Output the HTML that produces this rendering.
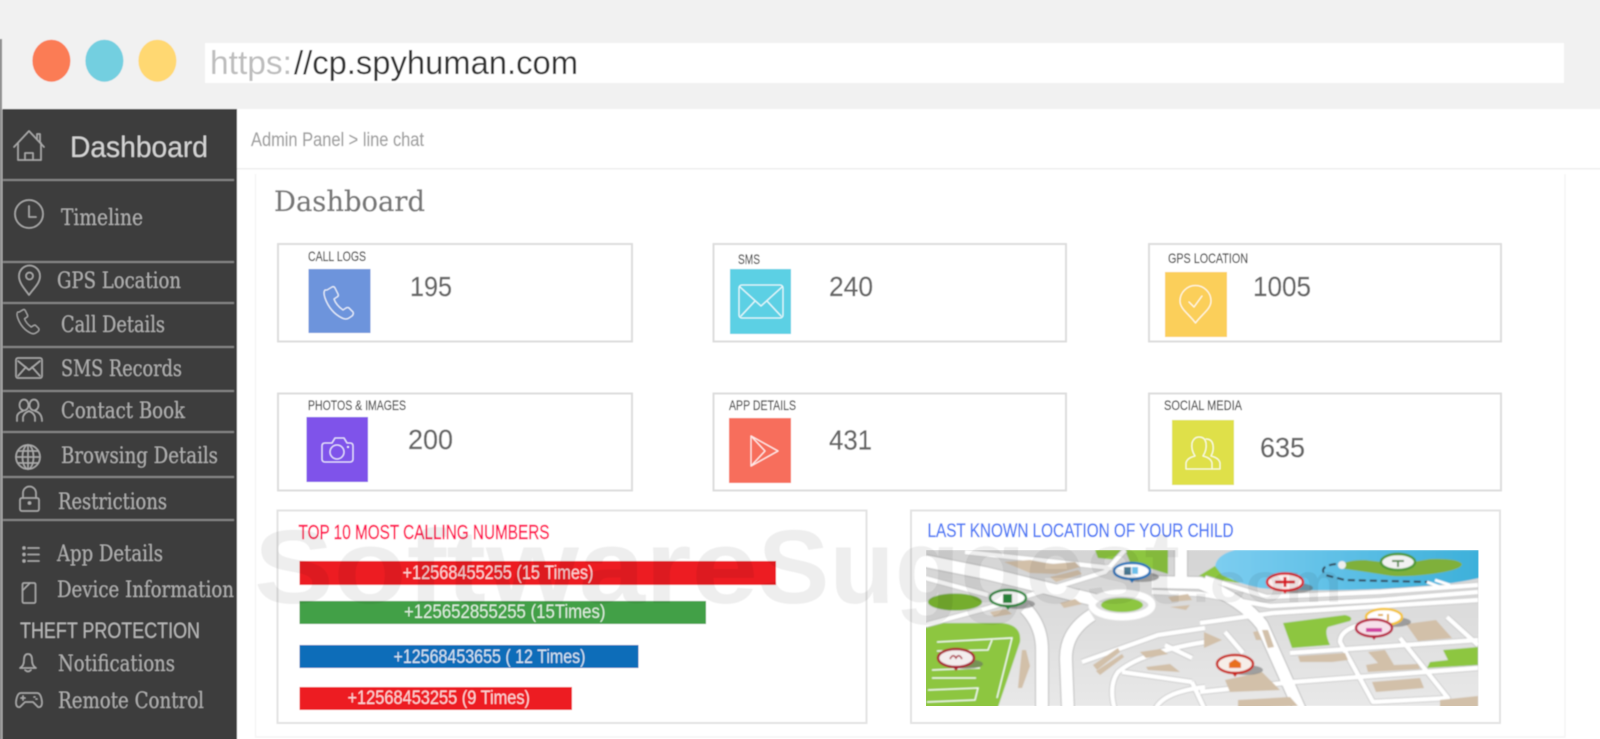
<!DOCTYPE html>
<html lang="en">
<head>
<meta charset="utf-8">
<title>cp.spyhuman.com Dashboard</title>
<style>
html,body{margin:0;padding:0;background:#fff;width:1600px;height:739px;overflow:hidden}
svg{display:block}
.ss{font-family:"Liberation Sans",sans-serif}
.sf{font-family:"DejaVu Serif","Liberation Serif",serif;font-size:22px;fill:#b0b0b0}
.lb{font-family:"Liberation Sans",sans-serif;font-size:14px;fill:#444;stroke:#444;stroke-width:.2px}
.nm{font-family:"Liberation Sans",sans-serif;font-size:28px;fill:#666;stroke:#666;stroke-width:.25px}
.bt{font-family:"Liberation Sans",sans-serif;font-size:19px;fill:#fff;fill-opacity:.82}
.ic{fill:none;stroke:#acacac;stroke-width:1.5;stroke-linejoin:round;stroke-linecap:round}
.wi{fill:none;stroke:#fff;stroke-opacity:.85;stroke-width:1.3;stroke-linejoin:round;stroke-linecap:round}
.card{fill:#fff;stroke:#dcdcdc;stroke-width:2}
</style>
</head>
<body>
<svg width="1600" height="739" viewBox="0 0 1600 739" xmlns="http://www.w3.org/2000/svg">
<defs>
<filter id="soft" filterUnits="userSpaceOnUse" x="-20" y="-20" width="1640" height="780"><feGaussianBlur stdDeviation="0.55"/></filter>
<filter id="softer" filterUnits="userSpaceOnUse" x="900" y="530" width="600" height="190"><feGaussianBlur stdDeviation="0.8"/></filter>
<clipPath id="mapclip"><rect x="926" y="550" width="552.5" height="156"/></clipPath>
<linearGradient id="mapbg" x1="0" y1="0" x2="0" y2="1"><stop offset="0" stop-color="#d4d4d4"/><stop offset="1" stop-color="#e8e8e8"/></linearGradient>
<linearGradient id="lake" x1="0" y1="0" x2="1" y2="0"><stop offset="0" stop-color="#7ccdf0"/><stop offset="1" stop-color="#3db0da"/></linearGradient>
<g id="wide">
<path d="M925 561L985 573L1095 600"/>
<path d="M1025 608Q1042 625 1042 650L1042 710"/>
<path d="M1092 615Q1065 632 1066 660L1068 710"/>
<path d="M1152 582L1200 583Q1243 600 1262 625L1300 710"/>
<path d="M1181 550L1181 578"/>
</g>
<g id="thin">
<path d="M925 578L988 595"/>
<path d="M925 625L988 608L1105 572L1125 550"/>
<path d="M965 552L1112 568"/>
<path d="M1152 592L1200 594L1270 606L1380 600L1478 592"/>
<path d="M1205 578L1267 597L1380 592L1478 585"/>
<path d="M1200 623L1273 613L1478 600"/>
<path d="M1205 642Q1142 652 1118 672Q1108 686 1115 710"/>
<path d="M1205 628L1158 635L1082 662"/>
<path d="M1122 672L1192 682"/>
<path d="M1165 645L1192 658"/>
<path d="M1155 710Q1162 692 1205 687"/>
<path d="M1200 692L1293 682L1478 668"/>
<path d="M1290 653L1478 640"/>
<path d="M1225 632L1243 653"/>
<path d="M1377 622Q1340 626 1340 642L1373 702L1448 698L1400 638"/>
<path d="M1447 617L1478 645"/>
<path d="M1192 682L1205 710"/>
</g>
</defs>
<g filter="url(#soft)">
<rect x="-20" y="-20" width="1640" height="129" fill="#f1f1f1"/>
<ellipse cx="51.4" cy="60.7" rx="19" ry="21" fill="#fb7b55"/>
<ellipse cx="104.4" cy="60.7" rx="19" ry="21" fill="#73cfe0"/>
<ellipse cx="157.4" cy="60.7" rx="19" ry="21" fill="#ffd872"/>
<rect x="205" y="43" width="1359" height="40" fill="#fff"/>
<text class="ss" x="210" y="74" font-size="33" fill="#bdbdbd" textLength="82" lengthAdjust="spacingAndGlyphs">https:</text>
<text class="ss" x="294" y="74" font-size="33" fill="#333" textLength="284" lengthAdjust="spacingAndGlyphs">//cp.spyhuman.com</text>

<rect x="237" y="109" width="1380" height="650" fill="#fff"/>
<rect x="237" y="168" width="1380" height="1.5" fill="#eeeeee"/>
<text class="ss" x="251" y="146" font-size="19" fill="#a0a0a0" stroke="#a0a0a0" stroke-width=".2" textLength="173" lengthAdjust="spacingAndGlyphs">Admin Panel &gt; line chat</text>
<path d="M255.500 174V737H1565V174" fill="none" stroke="#f5f5f5" stroke-width="1.500"/>
<text x="274" y="211" font-family="'DejaVu Serif','Liberation Serif',serif" font-size="28" fill="#777" stroke="#777" stroke-width=".3" textLength="151" lengthAdjust="spacingAndGlyphs">Dashboard</text>

<rect x="-20" y="39" width="22" height="720" fill="#757575"/>
<rect x="0" y="39" width="1.500" height="720" fill="#999"/>
<rect x="2.500" y="109" width="234.500" height="650" fill="#3d3d3d"/>
<g fill="#858585">
<rect x="3" y="179" width="231" height="2"/>
<rect x="3" y="261" width="231" height="2"/>
<rect x="3" y="302" width="231" height="2"/>
<rect x="3" y="346" width="231" height="2"/>
<rect x="3" y="390" width="231" height="2"/>
<rect x="3" y="431" width="231" height="2"/>
<rect x="3" y="476" width="231" height="2"/>
<rect x="3" y="519" width="231" height="2"/>
</g>
<text class="ss" x="70" y="157" font-size="30" fill="#d4d4d4" textLength="138" lengthAdjust="spacingAndGlyphs">Dashboard</text>
<text class="sf" x="61" y="225" textLength="82" lengthAdjust="spacingAndGlyphs">Timeline</text>
<text class="sf" x="57" y="288" textLength="124" lengthAdjust="spacingAndGlyphs">GPS Location</text>
<text class="sf" x="61" y="332" textLength="104" lengthAdjust="spacingAndGlyphs">Call Details</text>
<text class="sf" x="61" y="376" textLength="121" lengthAdjust="spacingAndGlyphs">SMS Records</text>
<text class="sf" x="61" y="418" textLength="124" lengthAdjust="spacingAndGlyphs">Contact Book</text>
<text class="sf" x="61" y="463" textLength="157" lengthAdjust="spacingAndGlyphs">Browsing Details</text>
<text class="sf" x="58" y="509" textLength="109" lengthAdjust="spacingAndGlyphs">Restrictions</text>
<text class="sf" x="57" y="561" textLength="106" lengthAdjust="spacingAndGlyphs">App Details</text>
<text class="sf" x="57" y="597" textLength="177" lengthAdjust="spacingAndGlyphs">Device Information</text>
<text class="ss" x="20" y="638" font-size="22" fill="#b8b8b8" textLength="180" lengthAdjust="spacingAndGlyphs">THEFT PROTECTION</text>
<text class="sf" x="58" y="671" textLength="117" lengthAdjust="spacingAndGlyphs">Notifications</text>
<text class="sf" x="58" y="708" textLength="146" lengthAdjust="spacingAndGlyphs">Remote Control</text>

<!-- sidebar icons -->
<path class="ic" d="M14 147L29 131L44 147M37 139V134H40V142M18 143V160H41V143M25 160V153H33V160"/>
<circle class="ic" cx="29" cy="214" r="14"/><path class="ic" d="M29 206V217H36"/>
<path class="ic" d="M29 295C24 288 19 283 19 276A10.500 10.500 0 0 1 40 276C40 283 34 288 29 295Z"/><circle class="ic" cx="29.500" cy="276" r="3.500"/>
<g transform="translate(17 309) scale(.75)"><path class="ic" stroke-width="2" d="M3 4l5-3q2-1 3 1l3 6q1 2-1 3l-3 2q2 6 9 11l3-2q2-1 3 0l4 4q1 2-1 4l-3 2q-3 2-7 0q-12-6-17-20q-2-6 0-8z"/></g>
<rect class="ic" x="16" y="358" width="26" height="20" rx="2"/><path class="ic" d="M18 361L29 370L40 361M18 376L26 367M40 376L32 367"/>
<path class="ic" d="M17 421V417Q17 413 23 411M35 411Q42 413 42 421M23 421V417Q24 413 29 411Q34 413 35 417V421"/><ellipse class="ic" cx="24" cy="405" rx="4.500" ry="5.500"/><ellipse class="ic" cx="34" cy="405" rx="4.500" ry="5.500"/>
<circle class="ic" cx="28" cy="457" r="12"/><ellipse class="ic" cx="28" cy="457" rx="5.500" ry="12"/><path class="ic" d="M16 457H40M18 451H38M18 463H38M28 445V469"/>
<rect class="ic" x="20" y="498" width="19" height="13" rx="2"/><path class="ic" d="M23 498V493A6.500 6.500 0 0 1 36 493V498"/><circle cx="29.500" cy="503" r="1.800" fill="#acacac"/>
<path class="ic" stroke-width="2" d="M28 548H39M28 554.500H39M28 561H39"/><g fill="#acacac"><circle cx="24" cy="548" r="1.700"/><circle cx="24" cy="554.500" r="1.700"/><circle cx="24" cy="561" r="1.700"/></g>
<rect class="ic" x="22.500" y="583" width="13" height="20" rx="1.500"/><path class="ic" d="M23 590L30 583"/>
<path class="ic" d="M20 668Q24 666 24 660Q24 654 28 654Q32 654 32 660Q32 666 36 668ZM25 670Q28 673 31 670"/>
<path class="ic" d="M21 693H37Q41 693 42 702Q42 708 38 707L33 702H25L20 707Q16 708 16 702Q17 693 21 693ZM23 696V700M21 698H25M34 697H35M36 699H37"/>

<!-- cards -->
<rect class="card" x="278" y="244" width="354" height="97.500"/>
<rect class="card" x="713.500" y="244" width="352.500" height="97.500"/>
<rect class="card" x="1149" y="244" width="352" height="97.500"/>
<rect class="card" x="278" y="393.500" width="354" height="97"/>
<rect class="card" x="713.500" y="393.500" width="352.500" height="97"/>
<rect class="card" x="1149" y="393.500" width="352" height="97"/>

<rect x="308.500" y="269" width="62" height="64" fill="#6d94dc"/>
<rect x="730" y="269" width="61" height="65" fill="#5bd0e4"/>
<rect x="1165" y="272" width="62" height="65" fill="#fbcf5a"/>
<rect x="306.500" y="417" width="61.500" height="65" fill="#7f52ea"/>
<rect x="729" y="418" width="62" height="65" fill="#f76e5c"/>
<rect x="1172" y="420" width="62" height="65" fill="#dfe04a"/>

<text class="lb" x="308" y="261" textLength="58" lengthAdjust="spacingAndGlyphs">CALL LOGS</text>
<text class="lb" x="738" y="264" textLength="22" lengthAdjust="spacingAndGlyphs">SMS</text>
<text class="lb" x="1168" y="263" textLength="80" lengthAdjust="spacingAndGlyphs">GPS LOCATION</text>
<text class="lb" x="308" y="410" textLength="98" lengthAdjust="spacingAndGlyphs">PHOTOS &amp; IMAGES</text>
<text class="lb" x="729" y="410" textLength="67" lengthAdjust="spacingAndGlyphs">APP DETAILS</text>
<text class="lb" x="1164" y="410" textLength="78" lengthAdjust="spacingAndGlyphs">SOCIAL MEDIA</text>

<text class="nm" x="410" y="296" textLength="42" lengthAdjust="spacingAndGlyphs">195</text>
<text class="nm" x="829" y="296" textLength="44" lengthAdjust="spacingAndGlyphs">240</text>
<text class="nm" x="1253" y="296" textLength="58" lengthAdjust="spacingAndGlyphs">1005</text>
<text class="nm" x="408" y="449" textLength="45" lengthAdjust="spacingAndGlyphs">200</text>
<text class="nm" x="829" y="449.500" textLength="43" lengthAdjust="spacingAndGlyphs">431</text>
<text class="nm" x="1260" y="457" textLength="45" lengthAdjust="spacingAndGlyphs">635</text>

<!-- tile icons -->
<g transform="translate(324 286)"><path class="wi" d="M3 4l5-3q2-1 3 1l3 6q1 2-1 3l-3 2q2 6 9 11l3-2q2-1 3 0l4 4q1 2-1 4l-3 2q-3 2-7 0q-12-6-17-20q-2-6 0-8z"/></g>
<rect class="wi" x="739" y="285" width="44" height="33" rx="3"/><path class="wi" d="M740 287L761 306L782 287M741 316L755 301M781 316L767 301"/>
<path class="wi" d="M1195.500 323C1189 314 1180 309 1180 301A15.500 15.500 0 0 1 1211 301C1211 309 1202 314 1195.500 323Z"/><path class="wi" stroke-width="2" d="M1189 302L1194 307L1202 296"/>
<path class="wi" d="M325 443H332L335 438H344L347 443H350Q353 443 353 446V459Q353 462 350 462H325Q322 462 322 459V446Q322 443 325 443Z"/><circle class="wi" cx="337" cy="452" r="7"/><circle cx="348" cy="447" r="1" fill="#fff"/>
<path class="wi" d="M751 436L778 451L751 466ZM751 436L765 451L751 466"/>
<path class="wi" d="M1186 469V463Q1187 458 1195 456Q1191 450 1192 443Q1194 437 1199 437Q1205 437 1206 443Q1207 450 1203 456Q1211 458 1212 463V469ZM1206 439Q1212 439 1213 445Q1214 451 1211 456Q1219 458 1220 463V469H1212"/>

<!-- bottom panels -->
<rect x="277.500" y="510.500" width="589" height="212.500" fill="#fff" stroke="#e2e2e2" stroke-width="2"/>
<rect x="911" y="510.500" width="589" height="212.500" fill="#fff" stroke="#e2e2e2" stroke-width="2"/>
<text class="ss" x="298.500" y="539" font-size="20" fill="#ff0a50" stroke="#ff0a50" stroke-width=".4" textLength="251" lengthAdjust="spacingAndGlyphs">TOP 10 MOST CALLING NUMBERS</text>
<text class="ss" x="927.500" y="537" font-size="19" fill="#4f7cf5" stroke="#4f7cf5" stroke-width=".35" textLength="306" lengthAdjust="spacingAndGlyphs">LAST KNOWN LOCATION OF YOUR CHILD</text>
<rect x="299.500" y="561" width="476.500" height="24" fill="#ed1c24"/>
<rect x="299.500" y="601" width="406.500" height="23" fill="#43a047"/>
<rect x="299.500" y="645" width="339" height="23" fill="#0b6db9"/>
<rect x="299.500" y="687" width="272.500" height="23" fill="#ed1c24"/>
<text class="bt" x="402.500" y="579" textLength="191" lengthAdjust="spacingAndGlyphs">+12568455255 (15 Times)</text>
<text class="bt" x="404" y="618" textLength="201.500" lengthAdjust="spacingAndGlyphs">+125652855255 (15Times)</text>
<text class="bt" x="393.500" y="663" textLength="192" lengthAdjust="spacingAndGlyphs">+12568453655 ( 12 Times)</text>
<text class="bt" x="347.500" y="704" textLength="182.500" lengthAdjust="spacingAndGlyphs">+12568453255 (9 Times)</text>
</g>

<!-- map -->
<g clip-path="url(#mapclip)" filter="url(#softer)">
<rect x="926" y="550" width="553" height="156" fill="url(#mapbg)"/>
<path d="M1095 550H1168V574L1130 562L1125 550L1118 560L1098 558Z" fill="#8dc63f"/>
<path d="M1235 550H1479V578Q1440 587 1380 589Q1300 592 1260 588Q1215 578 1215 567Q1216 555 1235 550Z" fill="url(#lake)"/>
<path d="M1197 577L1215 566L1222 575L1240 583Z" fill="#8dc63f"/>
<ellipse cx="955" cy="602" rx="27" ry="8.500" fill="#75ad2f"/>
<path d="M925 623H1002Q1022 625 1020 642L997 710H925Z" fill="#8dc63f"/>
<path d="M1283 623L1345 615Q1354 617 1350 621L1328 627Q1324 632 1330 645L1292 648Z" fill="#8dc63f"/>
<path d="M1443 650L1478 647V665L1427 668L1430 662L1448 660Z" fill="#8dc63f"/>
<g fill="none" stroke="#bcbcbc" stroke-width="14" stroke-linejoin="round"><use href="#wide"/></g>
<g fill="none" stroke="#c4c4c4" stroke-width="6" stroke-linejoin="round"><use href="#thin"/></g>
<g fill="none" stroke="#fff" stroke-width="12" stroke-linejoin="round"><use href="#wide"/></g>
<g fill="none" stroke="#fff" stroke-width="4.500" stroke-linejoin="round"><use href="#thin"/></g>
<g fill="#d2c0a9">
<path d="M1004 562L1030 560L1052 564L1075 562L1080 567L1056 574L1030 573Z"/>
<path d="M1050 577L1078 570L1082 574L1056 582Z"/>
<path d="M1060 603L1075 599L1082 604L1064 608Z"/>
<path d="M990 612L1006 609L1012 614L994 617Z"/>
<path d="M1022 650L1026 650L1030 666L1022 688L1018 688L1020 668Z"/>
<path d="M1093 665L1118 648L1120 652L1097 670ZM1096 671L1122 654L1124 657L1100 675Z"/>
<path d="M1140 652L1160 649L1168 654L1146 658Z"/>
<path d="M1146 667L1170 664L1180 672L1148 670Z"/>
<path d="M1168 597L1188 594L1192 600L1172 602ZM1170 607L1190 605L1186 610Z"/>
<path d="M1253 632L1258 631L1262 640L1256 640ZM1262 630L1268 630L1274 647L1268 648Z"/>
<path d="M1298 656L1345 653L1348 660L1332 662L1300 662Z"/>
<path d="M1368 652L1385 650L1394 665L1418 664L1420 669L1368 672L1366 665L1378 663Z"/>
<path d="M1372 682L1420 678L1424 688L1376 692Z"/>
<path d="M1406 624L1436 620L1452 638L1418 641Z"/>
<path d="M1238 700L1290 697L1298 706L1238 708Z"/>
<path d="M1225 680L1262 672L1280 690L1230 692Z"/>
<path d="M1204 632L1222 640L1204 648Z"/>
<path d="M1440 700L1478 696V708H1440Z"/>
</g>
<ellipse cx="1122" cy="605" rx="30" ry="12" fill="#dcdcdc" stroke="#fff" stroke-width="7"/>
<ellipse cx="1122" cy="605" rx="21" ry="7" fill="#8dc63f"/>
<path d="M1340 566Q1345 560 1365 560L1400 564L1430 559Q1458 558 1462 564Q1462 570 1432 574Q1400 578 1385 575Q1360 571 1345 569Z" fill="#7fb03a"/>
<circle cx="1342" cy="565" r="4" fill="#eee"/>
<path d="M1336 564Q1318 566 1325 575L1345 580L1430 582" fill="none" stroke="#345" stroke-width="2" stroke-dasharray="7 4"/>
<path d="M1427 582L1440 587M1435 580L1450 585" stroke="#fff" stroke-width="3"/>
<g fill="none" stroke="#fff" stroke-width="1.300">
<path d="M937 642L1012 638L997 698M992 640L988 650L937 651M932 670L980 668M932 678L976 678M928 690L978 688L975 700L927 702"/>
</g>
<!-- pins -->
<g>
<ellipse cx="1142" cy="577" rx="17" ry="5" fill="#666" opacity=".55"/><ellipse cx="1018" cy="604" rx="17" ry="5" fill="#666" opacity=".55"/><ellipse cx="966" cy="664" rx="17" ry="5" fill="#666" opacity=".55"/><ellipse cx="1296" cy="588" rx="17" ry="5" fill="#666" opacity=".55"/><ellipse cx="1394" cy="622" rx="17" ry="5" fill="#666" opacity=".55"/><ellipse cx="1246" cy="670" rx="17" ry="5" fill="#666" opacity=".55"/>
<path d="M1128 578L1132 583L1136 578Z" fill="#1e75bb"/><ellipse cx="1132" cy="571" rx="18" ry="8" fill="#fff" stroke="#1e75bb" stroke-width="2.500"/><rect x="1124" y="567" width="7" height="8" fill="#4a7a95"/><rect x="1132" y="567" width="6" height="7" fill="#6cc0ea"/>
<path d="M1004 605L1008 610L1012 605Z" fill="#2c8a3e"/><ellipse cx="1008" cy="598" rx="18" ry="8" fill="#fff" stroke="#2c8a3e" stroke-width="2.500"/><rect x="1003" y="594" width="9" height="9" fill="#2c8a3e"/>
<path d="M952 666L956 671L960 666Z" fill="#a81e32"/><ellipse cx="956" cy="658" rx="18" ry="9" fill="#f3eeee" stroke="#a81e32" stroke-width="2.500"/><path d="M950 659Q953 653 956 658Q959 653 962 659" fill="none" stroke="#a81e32" stroke-width="1.500"/>
<path d="M1281 589L1285 594L1289 589Z" fill="#d81f26"/><ellipse cx="1285" cy="582" rx="18" ry="8.500" fill="#fbeeee" stroke="#d81f26" stroke-width="2.500"/><path d="M1275 582H1295M1285 577V587" stroke="#d81f26" stroke-width="3"/>
<ellipse cx="1398" cy="562" rx="17" ry="8" fill="#f2f2f2" stroke="#4e9a35" stroke-width="2.500"/><path d="M1392 561H1404M1398 561V567" stroke="#5a8a50" stroke-width="2"/>
<ellipse cx="1384" cy="617" rx="18" ry="8" fill="#fff" stroke="#f4c430" stroke-width="2.500"/><path d="M1378 615H1383M1388 614V621" stroke="#e0a820" stroke-width="2"/>
<path d="M1370 635L1374 640L1378 635Z" fill="#b81e40"/><ellipse cx="1374" cy="628" rx="18" ry="8.500" fill="#f6e0ea" stroke="#b81e40" stroke-width="2.500"/><path d="M1366 630H1382" stroke="#d040a0" stroke-width="4"/>
<path d="M1231 672L1235 677L1239 672Z" fill="#c9281e"/><ellipse cx="1235" cy="664" rx="18" ry="9" fill="#f6eee8" stroke="#c9281e" stroke-width="2.500"/><path d="M1229 668V663L1235 659L1241 663V668" fill="#e8701e"/>
</g>
</g>

<!-- watermark -->
<g filter="url(#soft)" font-family="'Liberation Sans',sans-serif" font-weight="700" fill="#000" fill-opacity=".065">
<text x="254" y="603" font-size="105" textLength="504" lengthAdjust="spacingAndGlyphs">Software</text>
<text x="758" y="603" font-size="105" textLength="422" lengthAdjust="spacingAndGlyphs">Suggest</text>
<text x="1192" y="602" font-size="56" textLength="150" lengthAdjust="spacingAndGlyphs">.com</text>
</g>
</svg>
</body>
</html>
